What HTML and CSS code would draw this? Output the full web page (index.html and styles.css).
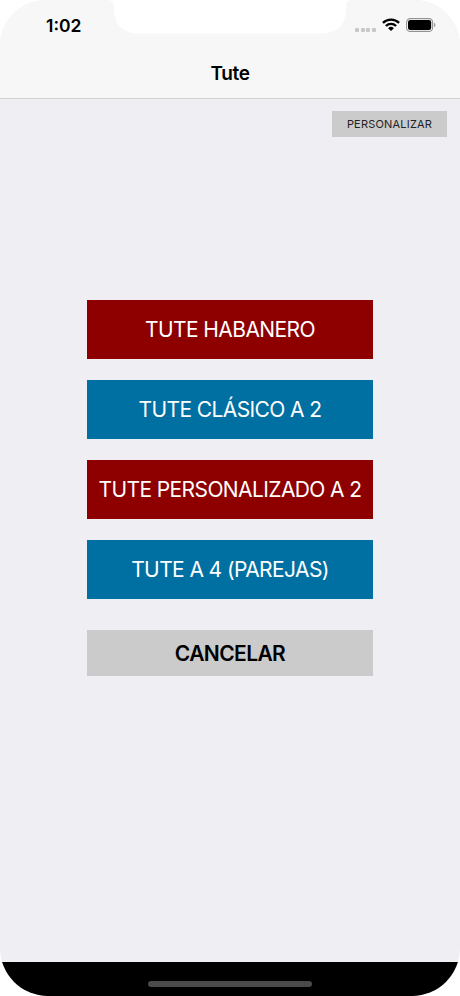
FILE: index.html
```
<!DOCTYPE html>
<html lang="es">
<head>
  <meta charset="UTF-8" />
  <title>Tute</title>
  <meta name="viewport" content="width=device-width, initial-scale=1.0" />
  <link rel="stylesheet" href="styles.css">
</head>
<body>

  <div class="screen">
    <!-- Notch -->
    <svg class="notch" width="246" height="34" viewBox="0 0 246 34">
      <path d="M0 0C4 0 7 2 7 6V9C7 24 16 33.500 31 33.500H215C230 33.500 239 24 239 9V6C239 2 242 0 246 0Z" fill="#fff"/>
    </svg>

    <!-- Header -->
    <header class="header">
      <div class="status-bar">
        <span class="time">1:02</span>
        <div class="status-icons">
          <div class="signal"><i></i><i></i><i></i><i></i></div>
          <svg class="wifi" width="18" height="13" viewBox="0 0 18 13">
            <g fill="none" stroke="#000" stroke-width="2.300">
              <path d="M0.900 4.900A11.600 11.600 0 0 1 17.100 4.900"/>
              <path d="M3.900 8A7.300 7.300 0 0 1 14.100 8"/>
            </g>
            <path d="M9 13L6.100 10.200A4.200 4.200 0 0 1 11.900 10.200Z"/>
          </svg>
          <svg class="battery" width="30" height="14" viewBox="0 0 30 14">
            <rect x="0.600" y="0.600" width="26" height="12.800" rx="3.700" fill="#fff" stroke="#929292" stroke-width="1.100"/>
            <rect x="2" y="2" width="23.200" height="10" rx="2.300"/>
            <path d="M28.100 4.800C29.800 5.400 29.800 8.600 28.100 9.200Z" fill="#929292"/>
          </svg>
        </div>
      </div>
      <h1 class="title">Tute</h1>
    </header>

    <!-- Game menu -->
    <main class="content">
      <button class="customize-btn">PERSONALIZAR</button>
      <div class="menu">
        <button class="menu-btn red">TUTE HABANERO</button>
        <button class="menu-btn blue">TUTE CLÁSICO A 2</button>
        <button class="menu-btn red">TUTE PERSONALIZADO A 2</button>
        <button class="menu-btn blue">TUTE A 4 (PAREJAS)</button>
        <button class="cancel-btn">CANCELAR</button>
      </div>
    </main>

    <footer class="footer">
      <div class="home-indicator"></div>
    </footer>
  </div>

</body>
</html>
```

FILE: styles.css
```
* {
  box-sizing: border-box;
}
body {
  margin: 0;
  background: #fff;
  font-family: Inter, "Liberation Sans", sans-serif;
}
.screen {
  position: relative;
  display: flex;
  flex-direction: column;
  height: 996px;
  overflow: hidden;
  background: #efeef3;
  border-radius: 46px 46px 48px 48px;
}
.notch {
  position: absolute;
  top: 0;
  left: 107px;
}
.header {
  height: 99px;
  background: #f7f7f7;
  border-bottom: 1px solid #d2d2d5;
}
.status-bar {
  display: flex;
  justify-content: space-between;
  height: 50px;
  padding: 0 24px 0 46px;
}
.time {
  padding-top: 15px;
  font-size: 17.500px;
  line-height: 22px;
  font-weight: 600;
}
.status-icons {
  display: flex;
  align-items: flex-start;
  padding-top: 18px;
}
.signal {
  display: flex;
  gap: 1.600px;
  margin: 10px 6px 0 0;
}
.signal i {
  width: 4px;
  height: 4px;
  border-radius: 1px;
  background: #c8c8c8;
}
.wifi {
  margin-right: 6px;
}
.title {
  margin: 12px 0 0;
  font-size: 19px;
  line-height: 24px;
  font-weight: 600;
  letter-spacing: -0.400px;
  text-align: center;
}
.content {
  flex: 1;
  display: flex;
  flex-direction: column;
  align-items: center;
}
button {
  display: block;
  padding: 0;
  border: none;
  font-family: inherit;
  white-space: nowrap;
  cursor: pointer;
}
.customize-btn {
  align-self: flex-end;
  width: 115px;
  height: 26px;
  margin: 12px 13px 0 0;
  background: #cbcbcb;
  color: #222;
  font-size: 11px;
  letter-spacing: 0.200px;
}
.menu {
  display: flex;
  flex-direction: column;
  gap: 21px;
  width: 286px;
  margin-top: 163px;
}
.menu-btn {
  height: 59px;
  color: #fff;
  font-size: 21px;
  font-weight: 400;
  letter-spacing: -0.600px;
}
.red {
  background: #8e0000;
}
.blue {
  background: #0070a2;
}
.cancel-btn {
  height: 46px;
  margin-top: 10px;
  background: #cbcbcb;
  color: #000;
  font-size: 21px;
  font-weight: 600;
  letter-spacing: -0.600px;
}
.footer {
  height: 34px;
  padding-top: 19px;
  background: #000;
}
.home-indicator {
  width: 164px;
  height: 6px;
  margin: 0 auto;
  border-radius: 3px;
  background: #4b4b4b;
}
```
